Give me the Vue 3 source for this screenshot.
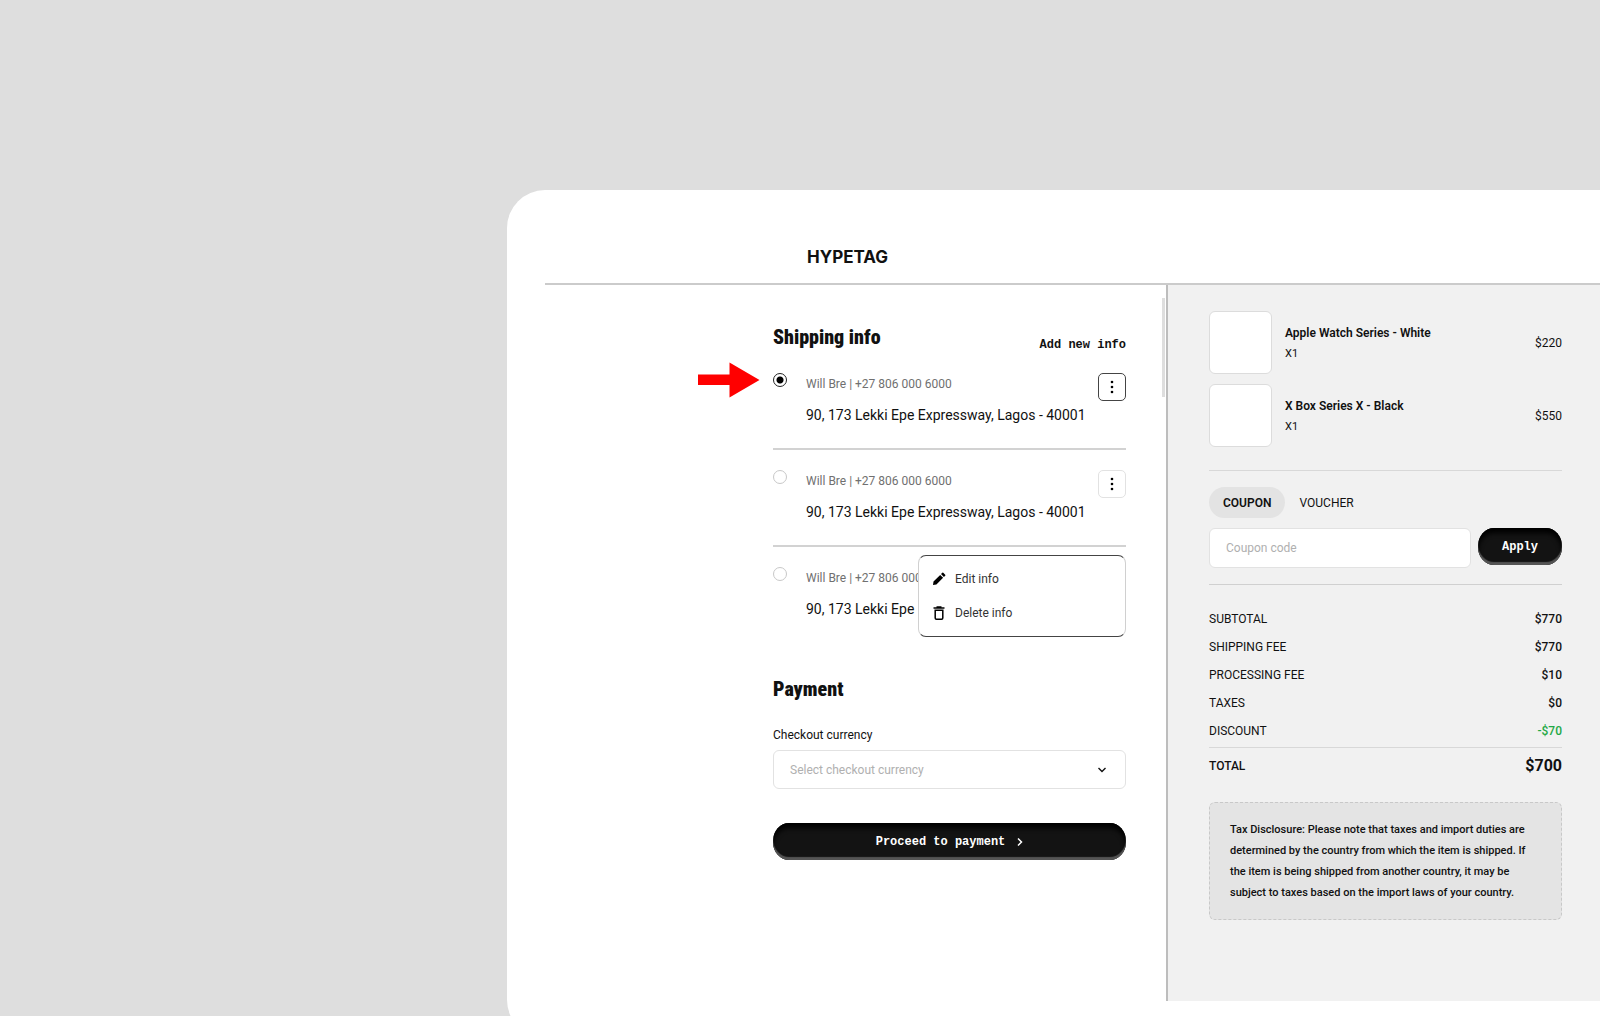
<script setup>
import { ref } from 'vue'

const addresses = ref([
  { id: 1, contact: 'Will Bre | +27 806 000 6000', street: '90, 173 Lekki Epe Expressway, Lagos - 40001' },
  { id: 2, contact: 'Will Bre | +27 806 000 6000', street: '90, 173 Lekki Epe Expressway, Lagos - 40001' },
  { id: 3, contact: 'Will Bre | +27 806 000 6000', street: '90, 173 Lekki Epe Expressway, Lagos - 40001' }
])
const selectedAddress = ref(1)
const openMenu = ref(3)

const items = [
  { name: 'Apple Watch Series - White', qty: 1, price: '$220' },
  { name: 'X Box Series X - Black', qty: 1, price: '$550' }
]

const fees = [
  { label: 'SUBTOTAL', value: '$770' },
  { label: 'SHIPPING FEE', value: '$770' },
  { label: 'PROCESSING FEE', value: '$10' },
  { label: 'TAXES', value: '$0' },
  { label: 'DISCOUNT', value: '-$70', discount: true }
]

const promoType = ref('coupon')
const couponCode = ref('')
const currency = ref('')

const toggleMenu = (id) => {
  openMenu.value = openMenu.value === id ? null : id
}
</script>

<template>
  <div class="stage">
    <div class="card">
      <header class="header">
        <span class="logo">HYPETAG</span>
      </header>

      <div class="checkout">
        <main class="main">
          <div class="section-head">
            <h2>Shipping info</h2>
            <button type="button" class="add-btn">Add new info</button>
          </div>

          <ul class="addresses">
            <li v-for="address in addresses" :key="address.id" class="address">
              <svg v-if="selectedAddress === address.id" class="arrow" width="62" height="36" viewBox="0 0 62 36">
                <path d="M0 12.500h31.500V0.500L61.500 18L31.500 35.500V23H0z" fill="#ff0000" />
              </svg>
              <input
                :id="`address-${address.id}`"
                v-model="selectedAddress"
                type="radio"
                name="address"
                :value="address.id"
              />
              <label :for="`address-${address.id}`">
                <span class="contact">{{ address.contact }}</span>
                <span class="street">{{ address.street }}</span>
              </label>
              <button
                type="button"
                class="more-btn"
                :class="{ active: selectedAddress === address.id }"
                aria-label="More options"
                @click="toggleMenu(address.id)"
              >
                <svg width="4" height="14" viewBox="0 0 4 14">
                  <circle cx="2" cy="2" r="1.300" />
                  <circle cx="2" cy="7" r="1.300" />
                  <circle cx="2" cy="12" r="1.300" />
                </svg>
              </button>

              <div v-if="openMenu === address.id" class="menu">
                <button type="button">
                  <svg width="14" height="14" viewBox="0 0 14 14">
                    <path d="M1 13l.5-3.400L8.200 2.900l2.900 2.900L4.400 12.500zM9 2.100l1.300-1.300q.5-.5 1 0l1.900 1.900q.5.500 0 1L11.900 5z" />
                  </svg>
                  Edit info
                </button>
                <button type="button">
                  <svg width="14" height="14" viewBox="0 0 14 14">
                    <path
                      d="M1.500 2h11M4.500 1h5M3.200 4.200h7.600v7.800q0 1.200-1.200 1.200H4.400q-1.200 0-1.200-1.200z"
                      fill="none"
                      stroke="#000"
                      stroke-width="1.500"
                    />
                  </svg>
                  Delete info
                </button>
              </div>
            </li>
          </ul>

          <h2 class="payment-title">Payment</h2>
          <label class="field-label" for="currency">Checkout currency</label>
          <div class="select-wrap">
            <select id="currency" v-model="currency">
              <option value="" disabled>Select checkout currency</option>
              <option value="usd">USD</option>
              <option value="ngn">NGN</option>
            </select>
            <svg width="10" height="6" viewBox="0 0 10 6">
              <path d="M1.500 1L5 4.500L8.500 1" fill="none" stroke="#111" stroke-width="1.400" />
            </svg>
          </div>

          <button type="button" class="dark-btn proceed">
            Proceed to payment
            <svg width="6" height="10" viewBox="0 0 6 10">
              <path d="M1 1.500L4.500 5L1 8.500" fill="none" stroke="#fff" stroke-width="1.500" />
            </svg>
          </button>
        </main>

        <aside class="summary">
          <span class="scroll-thumb"></span>

          <ul class="items">
            <li v-for="item in items" :key="item.name">
              <div class="thumb"></div>
              <div class="item-info">
                <strong>{{ item.name }}</strong>
                <span>X{{ item.qty }}</span>
              </div>
              <span class="price">{{ item.price }}</span>
            </li>
          </ul>

          <div class="promo">
            <div class="tabs">
              <button type="button" :class="{ active: promoType === 'coupon' }" @click="promoType = 'coupon'">COUPON</button>
              <button type="button" :class="{ active: promoType === 'voucher' }" @click="promoType = 'voucher'">VOUCHER</button>
            </div>
            <form class="promo-form" @submit.prevent>
              <input v-model="couponCode" type="text" placeholder="Coupon code" aria-label="Coupon code" />
              <button type="submit" class="dark-btn">Apply</button>
            </form>
          </div>

          <dl class="fees">
            <div v-for="fee in fees" :key="fee.label">
              <dt>{{ fee.label }}</dt>
              <dd :class="{ discount: fee.discount }">{{ fee.value }}</dd>
            </div>
            <div class="total">
              <dt>TOTAL</dt>
              <dd>$700</dd>
            </div>
          </dl>

          <p class="disclosure">
            Tax Disclosure: Please note that taxes and import duties are determined by the country from which the item
            is shipped. If the item is being shipped from another country, it may be subject to taxes based on the
            import laws of your country.
          </p>
        </aside>
      </div>
    </div>
  </div>
</template>

<style>
body {
  margin: 0;
  background: #dedede;
}
</style>

<style scoped>
.stage {
  height: 100vh;
  overflow: hidden;
  box-sizing: border-box;
  padding: 190px 0 0 507px;
  background: #dedede;
  color: #111;
  font-family: Roboto, "Liberation Sans", sans-serif;
  font-size: 12px;
}

.stage * {
  box-sizing: border-box;
}

button,
input,
select {
  margin: 0;
  font-family: inherit;
  font-size: 12px;
  color: inherit;
}

button {
  padding: 0;
  border: none;
  background: none;
  cursor: pointer;
}

ul,
dl,
dd,
p,
h2 {
  margin: 0;
  padding: 0;
  list-style: none;
}

.card {
  padding: 0 0 37px 38px;
  background: #fff;
  border-radius: 38px 0 0 38px;
}

.header {
  padding: 57px 0 16px 262px;
  border-bottom: 2px solid #cbcbcb;
}

.logo {
  display: block;
  font-family: Inter, sans-serif;
  font-size: 17px;
  line-height: 20px;
  font-weight: 700;
}

.checkout {
  display: grid;
  grid-template-columns: minmax(0, 1fr) 434px;
}

.main {
  padding: 38px 40px 0 228px;
}

.section-head {
  display: flex;
  justify-content: space-between;
  align-items: flex-end;
}

h2 {
  font-family: "Roboto Condensed", Roboto, sans-serif;
  font-size: 20px;
  line-height: 28px;
  font-weight: 900;
}

.add-btn {
  font-family: "Liberation Mono", monospace;
  font-weight: 700;
  line-height: 12px;
}

.address {
  position: relative;
  display: flex;
  align-items: flex-start;
  padding: 20px 0 23px;
}

.address:first-child {
  padding-top: 22px;
}

.address + .address {
  border-top: 2px solid #d2d2d2;
}

.arrow {
  position: absolute;
  top: 11px;
  right: calc(100% + 13px);
}

.address input {
  appearance: none;
  width: 14px;
  height: 14px;
  border: 1px solid #c8c8c8;
  border-radius: 50%;
}

.address input:checked {
  border-color: #222;
  background: radial-gradient(circle, #000 0 3px, #fff 4px);
}

.address label {
  display: flex;
  flex-direction: column;
  flex: 1;
  gap: 10px;
  margin-left: 19px;
}

.contact {
  line-height: 22px;
  color: #707070;
}

.street {
  font-size: 14px;
  line-height: 20px;
}

.more-btn {
  display: flex;
  align-items: center;
  justify-content: center;
  width: 28px;
  height: 28px;
  border: 1px solid #e2e2e2;
  border-radius: 5px;
}

.more-btn.active {
  border-color: #444;
}

.menu {
  position: absolute;
  top: 8px;
  right: 0;
  width: 208px;
  padding: 6px 13px;
  background: #fff;
  border: 1px solid;
  border-color: #444 #d0d0d0;
  border-radius: 8px;
}

.menu button {
  display: flex;
  align-items: center;
  gap: 9px;
  width: 100%;
  height: 34px;
  color: #333;
}

.menu svg {
  fill: #000;
}

.payment-title {
  margin-top: 33px;
}

.field-label {
  display: block;
  margin-top: 24px;
  line-height: 16px;
}

.select-wrap {
  position: relative;
  margin-top: 7px;
}

.select-wrap select {
  appearance: none;
  display: block;
  width: 100%;
  height: 39px;
  padding: 0 16px;
  border: 1px solid #e2e2e2;
  border-radius: 6px;
  background: #fff;
  color: #b0b0b0;
}

.select-wrap svg {
  position: absolute;
  top: 17px;
  right: 19px;
  pointer-events: none;
}

.dark-btn {
  height: 37px;
  border-radius: 16px / 18px;
  background: #131313;
  box-shadow: inset 0 -3px 1px #555, inset 0 5px 5px #000;
  color: #fff;
  font-family: "Liberation Mono", monospace;
  font-weight: 700;
}

.proceed {
  display: flex;
  align-items: center;
  justify-content: center;
  gap: 12px;
  width: 100%;
  margin-top: 34px;
}

.summary {
  position: relative;
  padding: 26px 38px 81px 41px;
  background: #f1f1f1;
  border-left: 2px solid #bdbdbd;
}

.scroll-thumb {
  position: absolute;
  top: 13px;
  left: -6px;
  width: 3px;
  height: 99px;
  background: #dedede;
}

.items {
  display: flex;
  flex-direction: column;
  gap: 10px;
  padding-bottom: 23px;
  border-bottom: 1px solid #d8d8d8;
}

.items li {
  display: flex;
  align-items: center;
  gap: 13px;
}

.thumb {
  width: 63px;
  height: 63px;
  background: #fff;
  border: 1px solid #dcdcdc;
  border-radius: 6px;
}

.item-info {
  display: flex;
  flex-direction: column;
  flex: 1;
  gap: 5px;
  padding-top: 2px;
  line-height: 16px;
}

.item-info strong {
  font-weight: 600;
}

.item-info span {
  font-size: 11px;
}

.promo {
  padding: 16px 0;
  border-bottom: 1px solid #d0d0d0;
}

.tabs {
  display: flex;
}

.tabs button {
  height: 31px;
  padding: 0 14px;
  border-radius: 16px;
}

.tabs .active {
  background: #e3e3e3;
  font-weight: 600;
}

.promo-form {
  display: flex;
  align-items: flex-start;
  gap: 7px;
  margin-top: 10px;
}

.promo-form input {
  flex: 1;
  min-width: 0;
  height: 40px;
  padding: 0 16px;
  border: 1px solid #e2e2e2;
  border-radius: 6px;
  background: #fff;
}

.promo-form input::placeholder {
  color: #b0b0b0;
}

.promo-form .dark-btn {
  width: 84px;
}

.fees {
  padding-top: 20px;
}

.fees div {
  display: flex;
  align-items: center;
  justify-content: space-between;
  height: 28px;
}

.fees dd {
  font-weight: 500;
}

.fees .discount {
  color: #1fa846;
}

.fees .total {
  height: 36px;
  margin-top: 2px;
  border-top: 1px solid #d8d8d8;
  font-weight: 500;
}

.fees .total dd {
  font-size: 16px;
  font-weight: 700;
}

.disclosure {
  margin-top: 19px;
  padding: 16px 20px;
  border: 1px dashed #c8c8c8;
  border-radius: 6px;
  background: #e4e4e4;
  font-size: 11px;
  font-weight: 500;
  line-height: 21px;
}
</style>
